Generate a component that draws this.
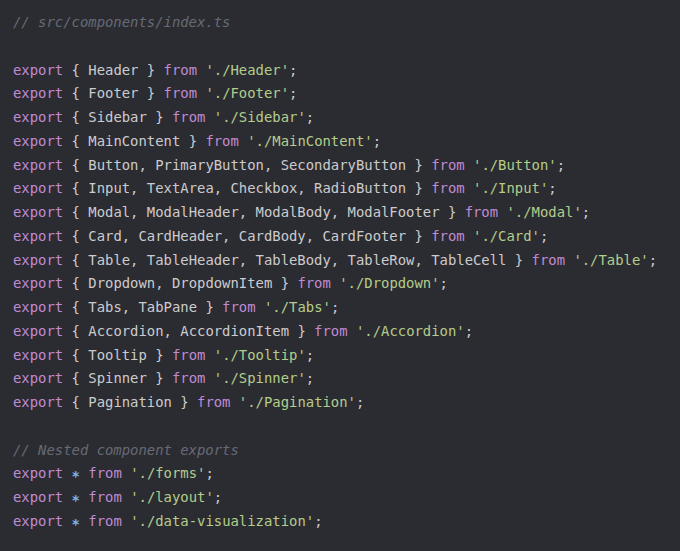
const lines: { name: string; from: string }[] = [
  { name: 'Header', from: './Header' },
  { name: 'Footer', from: './Footer' },
  { name: 'Sidebar', from: './Sidebar' },
  { name: 'MainContent', from: './MainContent' },
  { name: 'Button, PrimaryButton, SecondaryButton', from: './Button' },
  { name: 'Input, TextArea, Checkbox, RadioButton', from: './Input' },
  { name: 'Modal, ModalHeader, ModalBody, ModalFooter', from: './Modal' },
  { name: 'Card, CardHeader, CardBody, CardFooter', from: './Card' },
  { name: 'Table, TableHeader, TableBody, TableRow, TableCell', from: './Table' },
  { name: 'Dropdown, DropdownItem', from: './Dropdown' },
  { name: 'Tabs, TabPane', from: './Tabs' },
  { name: 'Accordion, AccordionItem', from: './Accordion' },
  { name: 'Tooltip', from: './Tooltip' },
  { name: 'Spinner', from: './Spinner' },
  { name: 'Pagination', from: './Pagination' },
];

const nested = ['./forms', './layout', './data-visualization'];

const Kw = ({ children }: { children: React.ReactNode }) => (
  <span className="text-[#c08ad3]">{children}</span>
);
const Str = ({ children }: { children: React.ReactNode }) => (
  <span className="not-italic text-[#b4cc8c]">{children}</span>
);

export default function App() {
  return (
    <div className="h-[551px] w-[680px] overflow-hidden bg-[#2b2c31] px-[13px] pt-[11px] font-['DejaVu_Sans_Mono',monospace] text-[13.9px] leading-[23.75px] text-[#cbcbce]">
      <pre className="whitespace-pre font-['DejaVu_Sans_Mono',monospace]">
        <div className="italic text-[#666a75]">// src/components/index.ts</div>
        <div>&nbsp;</div>
        {lines.map((l) => (
          <div key={l.from}>
            <Kw>export</Kw> {'{ '}
            {l.name}
            {' } '}
            <Kw>from</Kw> <Str>'{l.from}'</Str>;
          </div>
        ))}
        <div>&nbsp;</div>
        <div className="italic text-[#666a75]">// Nested component exports</div>
        {nested.map((n) => (
          <div key={n}>
            <Kw>export</Kw>{' '}
            <span className="inline-block translate-y-[3px] font-bold text-[#7fb6e2]">*</span>{' '}
            <Kw>from</Kw> <Str>'{n}'</Str>;
          </div>
        ))}
      </pre>
    </div>
  );
}
